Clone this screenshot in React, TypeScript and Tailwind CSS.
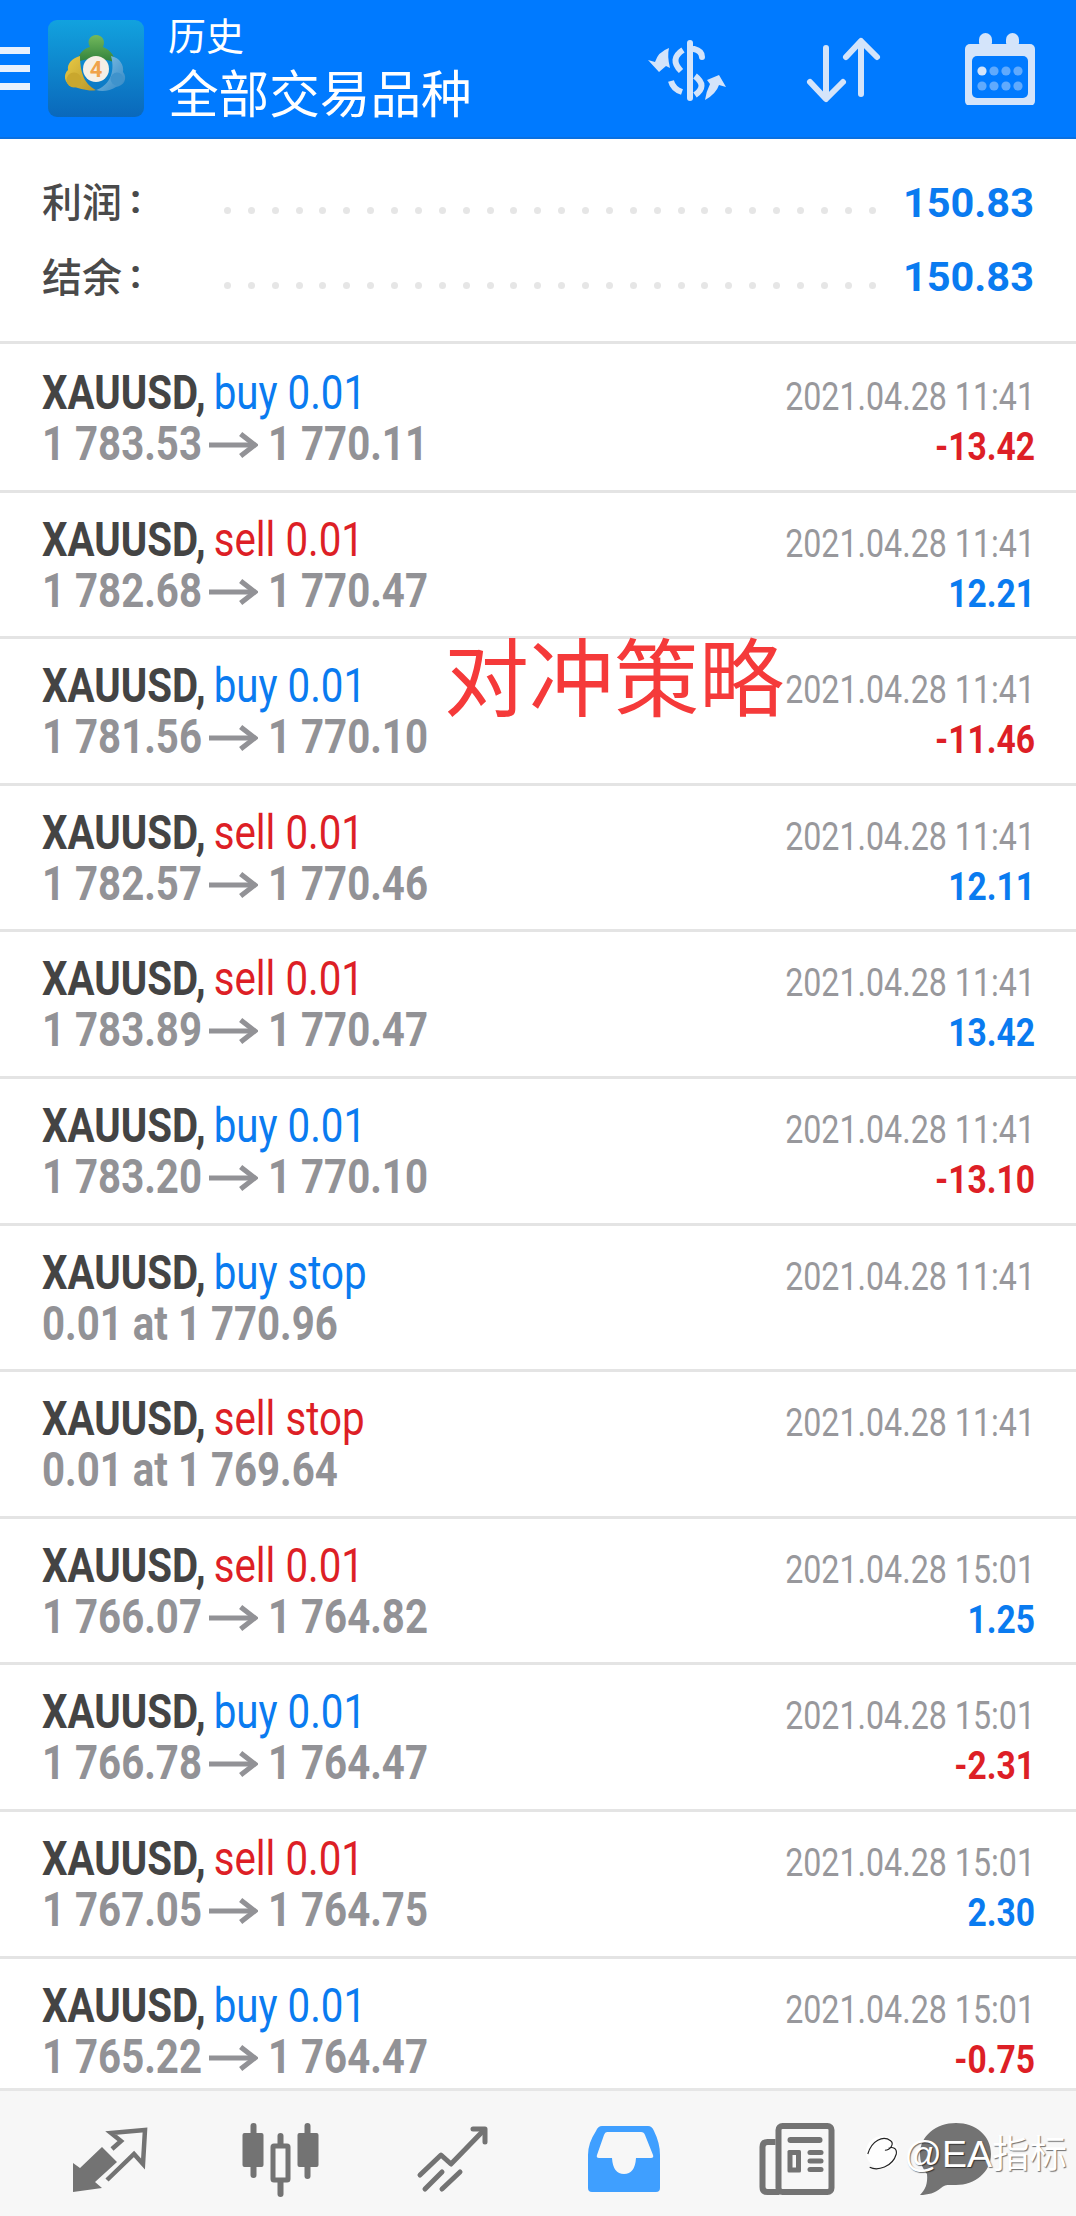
const FONT = "font-['Roboto','Liberation_Sans',sans-serif]";

type Row = { side: string; tone: 'buy' | 'sell'; from?: string; to?: string; at?: string; time: string; pnl?: string };

const rows: Row[] = [
  { side: 'buy 0.01', tone: 'buy', from: '1 783.53', to: '1 770.11', time: '2021.04.28 11:41', pnl: '-13.42' },
  { side: 'sell 0.01', tone: 'sell', from: '1 782.68', to: '1 770.47', time: '2021.04.28 11:41', pnl: '12.21' },
  { side: 'buy 0.01', tone: 'buy', from: '1 781.56', to: '1 770.10', time: '2021.04.28 11:41', pnl: '-11.46' },
  { side: 'sell 0.01', tone: 'sell', from: '1 782.57', to: '1 770.46', time: '2021.04.28 11:41', pnl: '12.11' },
  { side: 'sell 0.01', tone: 'sell', from: '1 783.89', to: '1 770.47', time: '2021.04.28 11:41', pnl: '13.42' },
  { side: 'buy 0.01', tone: 'buy', from: '1 783.20', to: '1 770.10', time: '2021.04.28 11:41', pnl: '-13.10' },
  { side: 'buy stop', tone: 'buy', at: '0.01 at 1 770.96', time: '2021.04.28 11:41' },
  { side: 'sell stop', tone: 'sell', at: '0.01 at 1 769.64', time: '2021.04.28 11:41' },
  { side: 'sell 0.01', tone: 'sell', from: '1 766.07', to: '1 764.82', time: '2021.04.28 15:01', pnl: '1.25' },
  { side: 'buy 0.01', tone: 'buy', from: '1 766.78', to: '1 764.47', time: '2021.04.28 15:01', pnl: '-2.31' },
  { side: 'sell 0.01', tone: 'sell', from: '1 767.05', to: '1 764.75', time: '2021.04.28 15:01', pnl: '2.30' },
  { side: 'buy 0.01', tone: 'buy', from: '1 765.22', to: '1 764.47', time: '2021.04.28 15:01', pnl: '-0.75' },
];

function TradeRow({ r, first }: { r: Row; first: boolean }) {
  const sideColor = r.tone === 'buy' ? 'text-[#0a7bf0]' : 'text-[#dd1f26]';
  const pnlColor = r.pnl && r.pnl.startsWith('-') ? 'text-[#dd1f26]' : 'text-[#0a7bf0]';
  return (
    <div className={`flex shrink-0 justify-between border-b-[3px] border-[#e4e4e4] pl-[42px] pr-[41px] ${first ? 'h-[148.6px] pt-[25px]' : 'h-[146.6px] pt-[23px]'}`}>
      <div className="flex flex-col">
        <div className="h-[51px] origin-left scale-y-[1.18] whitespace-nowrap text-[40.2px] leading-[50px]">
          <span className="font-bold text-[#444444]">XAUUSD,</span>{' '}
          <span className={`ml-[-2px] text-[40.3px] ${sideColor}`}>{r.side}</span>
        </div>
        <div className="flex h-[50px] origin-left scale-y-[1.18] items-center whitespace-nowrap text-[40.2px] font-bold leading-[50px] text-[#929296]">
          {r.at ? (
            r.at
          ) : (
            <>
              <span>{r.from}</span>
              <svg viewBox="0 0 48 26" className="ml-[7px] mr-[10px] h-[22px] w-[49px]" preserveAspectRatio="none" fill="none" stroke="#929296" strokeWidth="5">
                <path d="M0 13 H44" />
                <path d="M31 2 L45 13 L31 24" />
              </svg>
              <span>{r.to}</span>
            </>
          )}
        </div>
      </div>
      <div className="flex flex-col items-end pt-[3px]">
        <div className="h-[50px] origin-right scale-y-[1.2] whitespace-nowrap text-[32.2px] leading-[50px] text-[#98989c]">{r.time}</div>
        {r.pnl && (
          <div className={`h-[50px] origin-right scale-y-[1.14] whitespace-nowrap text-[33.6px] font-bold leading-[50px] ${pnlColor}`}>{r.pnl}</div>
        )}
      </div>
    </div>
  );
}

function Dots() {
  return (
    <div className="ml-auto mr-[27px] flex w-[652px] justify-between">
      {Array.from({ length: 28 }).map((_, i) => (
        <span key={i} className="h-[7px] w-[7px] rounded-full bg-[#e6e6e6]" />
      ))}
    </div>
  );
}

function Logo() {
  return (
    <svg viewBox="0 0 96 97" className="ml-[18px] h-[97px] w-[96px] shrink-0">
      <defs>
        <linearGradient id="lg" x1="0" y1="0" x2="0" y2="1">
          <stop offset="0" stopColor="#12a2de" />
          <stop offset="1" stopColor="#0a68bb" />
        </linearGradient>
        <linearGradient id="gr" x1="0" y1="0" x2="0" y2="1">
          <stop offset="0" stopColor="#73b95c" />
          <stop offset="1" stopColor="#2f7f3a" />
        </linearGradient>
        <linearGradient id="ye" x1="0" y1="0" x2="1" y2="1">
          <stop offset="0" stopColor="#e9cb45" />
          <stop offset="1" stopColor="#b8962a" />
        </linearGradient>
        <linearGradient id="bl" x1="0" y1="0" x2="1" y2="1">
          <stop offset="0" stopColor="#8cc6e8" />
          <stop offset="1" stopColor="#2f86c4" />
        </linearGradient>
      </defs>
      <rect width="96" height="97" rx="9" fill="url(#lg)" />
      <path d="M30 42 C30 32 38 28 42 27 C38 20 43 15 48 15 C54 15 58 20 55 27 C60 29 67 34 67 43 C60 38 36 38 30 42 Z" fill="url(#gr)" />
      <path d="M32 36 C24 38 19 44 20 50 C15 54 16 64 24 66 C30 68 42 72 48 70 C40 66 32 58 32 36 Z" fill="url(#ye)" />
      <circle cx="26" cy="60" r="7.5" fill="#c9a72e" />
      <path d="M63 36 C72 38 76 45 75 52 C80 58 76 66 68 67 C62 71 54 72 48 70 C60 66 68 54 63 36 Z" fill="url(#bl)" />
      <circle cx="69" cy="59" r="6.5" fill="#3f93cc" />
      <circle cx="48" cy="49" r="13" fill="#f6efe6" />
      <text x="48" y="57" textAnchor="middle" fontSize="22" fontWeight="700" fill="#f0a24a" fontFamily="Roboto, sans-serif">4</text>
    </svg>
  );
}

function HeaderIcons() {
  const c = '#d4e4fa';
  return (
    <div className="ml-auto mr-[41px] flex items-center">
      <svg viewBox="648 30 84 70" className="h-[70px] w-[84px]" fill="none" stroke={c} strokeLinecap="round">
        <path d="M691 39 V94" strokeWidth="6" />
        <path d="M695 45 Q703 47 703 53" strokeWidth="6" />
        <path d="M684 46 Q670 55 682 67" strokeWidth="6" strokeLinecap="butt" />
        <path d="M696 72 Q709 82 696 91" strokeWidth="6" strokeLinecap="butt" />
        <path d="M672 77 Q674 85 683 88" strokeWidth="6" strokeLinecap="butt" />
        <path d="M649 56 L660 68 L667 62 L671 64 Q668 52 670 44 Q659 48 656 58 Z" fill={c} stroke="none" />
        <path d="M727 83 L720 71 L708 76 L711 80 Q707 88 706 96 Q717 90 720 81 Z" fill={c} stroke="none" />
      </svg>
      <svg viewBox="804 32 80 70" className="ml-[73px] h-[70px] w-[80px]" fill="none" stroke={c} strokeWidth="6" strokeLinecap="round" strokeLinejoin="round">
        <path d="M826 46 V95" />
        <path d="M810 80 L826 97 L843 80" />
        <path d="M861 40 V92" />
        <path d="M846 55 L861 39 L877 55" />
      </svg>
      <svg viewBox="965 30 70 73" className="ml-[81px] h-[73px] w-[70px]">
        <rect x="965" y="42" width="70" height="62" rx="5" fill={c} />
        <rect x="979" y="31" width="13" height="16" rx="6.5" fill={c} />
        <rect x="1006" y="31" width="13" height="16" rx="6.5" fill={c} />
        <rect x="972" y="54" width="56" height="42" rx="5" fill="#007aff" />
        {[982, 994, 1006, 1018].map((x, i) => (
          <circle key={x} cx={x} cy="69" r="4.6" fill={c} opacity={i === 0 ? 1 : 0.45} />
        ))}
        {[982, 994, 1006, 1018].map((x) => (
          <circle key={x} cx={x} cy="84" r="4.6" fill={c} opacity="0.45" />
        ))}
      </svg>
    </div>
  );
}

function Footer() {
  const g = '#737373';
  return (
    <div className="grid h-[128px] shrink-0 grid-cols-6 border-t-[3px] border-[#e6e6e6] bg-[#f7f7f7] px-[23px]">
      <div className="flex items-center justify-center">
        <svg viewBox="59 2109 100 90" className="h-[90px] w-[100px]">
          <path d="M73 2163 L80 2168 L102 2147 L117 2162 L95 2182 L102 2188 L73 2192 Z" fill={g} />
          <path d="M112 2149 L121 2141 L111 2133 L145 2130 L143 2164 L134 2154 L107 2180" fill="none" stroke={g} strokeWidth="4.5" />
        </svg>
      </div>
      <div className="flex items-center justify-center">
        <svg viewBox="230.5 2109 100 90" className="h-[90px] w-[100px]" stroke={g} fill="none" strokeLinecap="round">
          <path d="M254 2126 V2175" strokeWidth="6" />
          <rect x="243" y="2133" width="21" height="34" rx="2" fill={g} stroke="none" />
          <path d="M281 2136 V2194" strokeWidth="6" />
          <rect x="273.5" y="2146" width="15" height="34" rx="1" fill="#f7f7f7" strokeWidth="5" />
          <path d="M308 2126 V2176" strokeWidth="6" />
          <rect x="298" y="2133" width="21" height="34" rx="2" fill={g} stroke="none" />
        </svg>
      </div>
      <div className="flex items-center justify-center">
        <svg viewBox="402 2109 100 90" className="h-[90px] w-[100px]" fill="none" stroke={g} strokeWidth="5" strokeLinecap="round" strokeLinejoin="round">
          <path d="M420 2175 L441 2155 L451 2164 L484 2130" />
          <path d="M473 2129 H485 V2142" />
          <path d="M425 2189 L442 2172" />
          <path d="M442 2189 L460 2172" />
        </svg>
      </div>
      <div className="flex items-center justify-center">
        <svg viewBox="574 2109 100 90" className="h-[90px] w-[100px]">
          <path d="M602 2126 H648 Q652 2126 654 2131 Q660 2143 660 2155 V2188 Q660 2192 656 2192 H592 Q588 2192 588 2188 V2155 Q588 2143 596 2131 Q598 2126 602 2126 Z" fill="#3f9fff" />
          <path d="M607 2132 H641 Q644 2132 645 2135 L653 2155 Q654 2158 651 2158 H636 Q635 2174 624 2174 Q613 2174 612 2158 H599 Q596 2158 597 2155 L604 2135 Q605 2132 607 2132 Z" fill="#f7f7f7" />
        </svg>
      </div>
      <div className="flex items-center justify-center">
        <svg viewBox="745.5 2109 100 90" className="h-[90px] w-[100px]" fill="none">
          <rect x="779" y="2126" width="53" height="66" rx="4" stroke={g} strokeWidth="6" />
          <path d="M776 2142 H768 Q763 2142 763 2147 V2187 Q763 2192 768 2192 H780" stroke={g} strokeWidth="6" />
          <rect x="788" y="2137" width="35" height="6" rx="3" fill={g} />
          <rect x="788" y="2150" width="13.5" height="22.5" rx="1.5" fill={g} />
          <rect x="793" y="2155" width="3.5" height="12.5" fill="#f7f7f7" />
          <rect x="808" y="2150" width="16" height="5" rx="2.5" fill={g} />
          <rect x="808" y="2158.5" width="16" height="5" rx="2.5" fill={g} />
          <rect x="808" y="2167" width="16" height="5" rx="2.5" fill={g} />
        </svg>
      </div>
      <div className="flex items-center justify-center">
        <svg viewBox="917 2109 100 90" className="h-[90px] w-[100px]">
          <path d="M956 2123 C976 2123 991 2136 991 2154 C991 2172 975 2185 956 2185 C949 2185 945 2184 941 2188 C935 2193 928 2195 920 2195 C925 2190 928 2184 927 2174 C922 2168 920 2161 920 2154 C920 2136 936 2123 956 2123 Z" fill={g} />
        </svg>
      </div>
    </div>
  );
}

export default function App() {
  return (
    <div className={`relative flex h-[2216px] w-[1076px] flex-col overflow-hidden bg-white ${FONT}`}>
      <header className="flex h-[139px] shrink-0 items-center border-b-2 border-[#0a70e0] bg-[#007aff]">
        <div className="flex w-[30px] shrink-0 flex-col gap-[11px]">
          <span className="h-[7px] bg-[#e8f1fd]" />
          <span className="h-[7px] bg-[#e8f1fd]" />
          <span className="h-[7px] bg-[#e8f1fd]" />
        </div>
        <Logo />
        <div className="ml-[24px] flex flex-col font-['Noto_Sans_CJK_SC',sans-serif] text-white">
          <div className="h-[46px] text-[38px] leading-[40px]">历史</div>
          <div className="h-[64px] text-[50.6px] leading-[62px]">全部交易品种</div>
        </div>
        <HeaderIcons />
      </header>

      <section className="flex h-[205px] shrink-0 flex-col border-b-[3px] border-[#e4e4e4] px-[42px] pt-[34px]">
        {[0, 1].map((i) => (
          <div key={i} className="flex h-[75px] items-center">
            <span className="mb-[22px] flex items-center text-[40px] leading-[50px] text-[#4a4a4a]">
              <span className="font-['Noto_Sans_CJK_SC',sans-serif] font-medium">{i === 0 ? '利润' : '结余'}</span>
              <span className="ml-[8px] font-bold">:</span>
            </span>
            <Dots />
            <span className={`text-[41.5px] font-bold leading-[50px] text-[#0a7bf0] ${i === 0 ? 'mb-[16px]' : 'mb-[18px]'}`}>150.83</span>
          </div>
        ))}
      </section>

      <main className="flex min-h-0 flex-1 flex-col overflow-hidden">
        {rows.map((r, i) => (
          <TradeRow key={i} r={r} first={i === 0} />
        ))}
      </main>

      <Footer />

      <div className="absolute left-[444px] top-[623px] whitespace-nowrap font-['Noto_Sans_CJK_SC',sans-serif] text-[85px] leading-[100px] text-[#f53a3a]">对冲策略</div>

      <div className="absolute left-[864px] top-[2132px] flex items-center gap-[2px]">
        <svg viewBox="0 0 40 44" className="h-[44px] w-[38px]" fill="none" stroke="#222222" strokeWidth="1.2">
          <circle cx="19" cy="20" r="17" fill="#ffffff" stroke="none" opacity="0.85" />
          <path d="M4 22 C8 8 20 2 28 8 C32 11 28 18 22 18 M6 36 C14 40 30 36 34 22 C35 16 30 14 26 16" />
        </svg>
        <span className="whitespace-nowrap font-['Liberation_Sans','Noto_Sans_CJK_SC',sans-serif] text-[37.5px] leading-[44px] text-white [text-shadow:1px_1px_1px_rgba(0,0,0,0.55)]">@EA指标</span>
      </div>
    </div>
  );
}
